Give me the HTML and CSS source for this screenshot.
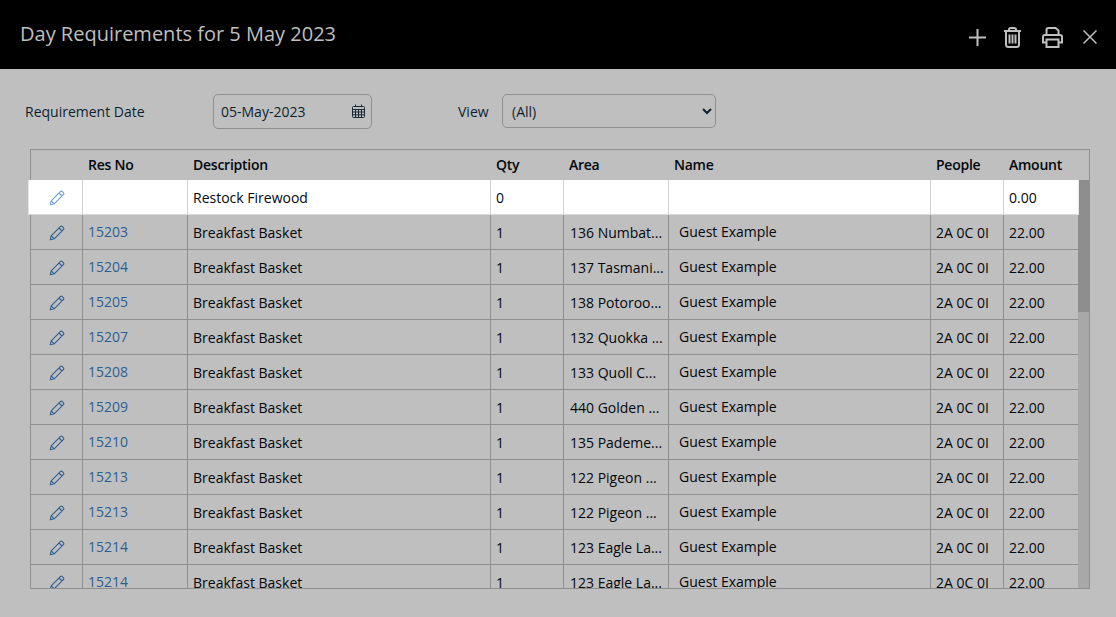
FILE: index.html
```html
<!DOCTYPE html>
<html lang="en">
<head>
<meta charset="utf-8">
<title>Day Requirements</title>
<link rel="stylesheet" href="styles.css">
</head>
<body>
<svg class="defs" width="0" height="0" aria-hidden="true">
  <symbol id="pencil" viewBox="0 0 16 16">
    <path d="M1.200 14.800l1-4L11.300 1.700a1.500 1.500 0 0 1 2.100 0l.9.9a1.500 1.500 0 0 1 0 2.100L5.200 13.800zM2.200 10.800l3 3M10 3l3 3" fill="none" stroke="currentColor" stroke-width="1.100" stroke-linejoin="round"/>
  </symbol>
</svg>
<header class="topbar">
  <h1 class="title">Day Requirements for 5 May 2023</h1>
  <div class="actions">
    <svg class="icon plus" viewBox="0 0 17 17"><path d="M8.500 0v17M0 8.500h17"/></svg>
    <svg class="icon trash" viewBox="0 0 19 21"><path d="M1 4h17M6 4V2.800A1.800 1.800 0 0 1 7.800 1h3.400A1.800 1.800 0 0 1 13 2.800V4M3 4v13.500A2.500 2.500 0 0 0 5.500 20h8a2.500 2.500 0 0 0 2.500-2.500V4M6.500 7.500v9M9.500 7.500v9M12.500 7.500v9"/></svg>
    <svg class="icon print" viewBox="0 0 21 21"><path d="M4.500 8V3a2 2 0 0 1 2-2h7l3 2.500V8M4.500 15.500H1V10a2 2 0 0 1 2-2h15a2 2 0 0 1 2 2v5.500h-3.500M4.500 12.500h12V20h-12z"/></svg>
    <svg class="icon close" viewBox="0 0 14 14"><path d="M.5.5l13 13M13.500.5l-13 13"/></svg>
  </div>
</header>
<main class="content">
  <form class="filters">
    <label class="label date-label" for="date">Requirement Date</label>
    <div class="date-box">
      <span id="date" class="date-value">05-May-2023</span>
      <svg class="cal" viewBox="0 0 13 14"><path d="M1.500 2.500h10a1 1 0 0 1 1 1v9a1 1 0 0 1-1 1h-10a1 1 0 0 1-1-1v-9a1 1 0 0 1 1-1zM.5 5.500h12M.5 8h12M.5 10.800h12M3.500 5.500v8M6.500 5.500v8M9.500 5.500v8M3.500 .5v2M9.500 .5v2"/></svg>
    </div>
    <label class="label view-label" for="view">View</label>
    <select id="view" class="view-select"><option>(All)</option></select>
  </form>
  <section class="grid">
    <div class="row head">
      <div class="cell"></div><div class="cell">Res No</div><div class="cell">Description</div><div class="cell">Qty</div><div class="cell">Area</div><div class="cell">Name</div><div class="cell">People</div><div class="cell">Amount</div>
    </div>
    <div class="scroller">
      <div class="rows">
        <div class="row item active">
          <div class="cell"><svg class="pen"><use href="#pencil"/></svg></div><div class="cell"></div><div class="cell">Restock Firewood</div><div class="cell">0</div><div class="cell"></div><div class="cell"></div><div class="cell"></div><div class="cell">0.00</div>
        </div>
        <div class="row item"><div class="cell"><svg class="pen"><use href="#pencil"/></svg></div><div class="cell res">15203</div><div class="cell">Breakfast Basket</div><div class="cell">1</div><div class="cell area">136 Numbat...</div><div class="cell guest">Guest Example</div><div class="cell">2A 0C 0I</div><div class="cell">22.00</div></div>
        <div class="row item"><div class="cell"><svg class="pen"><use href="#pencil"/></svg></div><div class="cell res">15204</div><div class="cell">Breakfast Basket</div><div class="cell">1</div><div class="cell area">137 Tasmani...</div><div class="cell guest">Guest Example</div><div class="cell">2A 0C 0I</div><div class="cell">22.00</div></div>
        <div class="row item"><div class="cell"><svg class="pen"><use href="#pencil"/></svg></div><div class="cell res">15205</div><div class="cell">Breakfast Basket</div><div class="cell">1</div><div class="cell area">138 Potoroo...</div><div class="cell guest">Guest Example</div><div class="cell">2A 0C 0I</div><div class="cell">22.00</div></div>
        <div class="row item"><div class="cell"><svg class="pen"><use href="#pencil"/></svg></div><div class="cell res">15207</div><div class="cell">Breakfast Basket</div><div class="cell">1</div><div class="cell area">132 Quokka ...</div><div class="cell guest">Guest Example</div><div class="cell">2A 0C 0I</div><div class="cell">22.00</div></div>
        <div class="row item"><div class="cell"><svg class="pen"><use href="#pencil"/></svg></div><div class="cell res">15208</div><div class="cell">Breakfast Basket</div><div class="cell">1</div><div class="cell area">133 Quoll C...</div><div class="cell guest">Guest Example</div><div class="cell">2A 0C 0I</div><div class="cell">22.00</div></div>
        <div class="row item"><div class="cell"><svg class="pen"><use href="#pencil"/></svg></div><div class="cell res">15209</div><div class="cell">Breakfast Basket</div><div class="cell">1</div><div class="cell area">440 Golden ...</div><div class="cell guest">Guest Example</div><div class="cell">2A 0C 0I</div><div class="cell">22.00</div></div>
        <div class="row item"><div class="cell"><svg class="pen"><use href="#pencil"/></svg></div><div class="cell res">15210</div><div class="cell">Breakfast Basket</div><div class="cell">1</div><div class="cell area">135 Pademe...</div><div class="cell guest">Guest Example</div><div class="cell">2A 0C 0I</div><div class="cell">22.00</div></div>
        <div class="row item"><div class="cell"><svg class="pen"><use href="#pencil"/></svg></div><div class="cell res">15213</div><div class="cell">Breakfast Basket</div><div class="cell">1</div><div class="cell area">122 Pigeon ...</div><div class="cell guest">Guest Example</div><div class="cell">2A 0C 0I</div><div class="cell">22.00</div></div>
        <div class="row item"><div class="cell"><svg class="pen"><use href="#pencil"/></svg></div><div class="cell res">15213</div><div class="cell">Breakfast Basket</div><div class="cell">1</div><div class="cell area">122 Pigeon ...</div><div class="cell guest">Guest Example</div><div class="cell">2A 0C 0I</div><div class="cell">22.00</div></div>
        <div class="row item"><div class="cell"><svg class="pen"><use href="#pencil"/></svg></div><div class="cell res">15214</div><div class="cell">Breakfast Basket</div><div class="cell">1</div><div class="cell area">123 Eagle La...</div><div class="cell guest">Guest Example</div><div class="cell">2A 0C 0I</div><div class="cell">22.00</div></div>
        <div class="row item"><div class="cell"><svg class="pen"><use href="#pencil"/></svg></div><div class="cell res">15214</div><div class="cell">Breakfast Basket</div><div class="cell">1</div><div class="cell area">123 Eagle La...</div><div class="cell guest">Guest Example</div><div class="cell">2A 0C 0I</div><div class="cell">22.00</div></div>
      </div>
      <div class="scrollbar"><div class="thumb"></div></div>
    </div>
  </section>
</main>
</body>
</html>
```
FILE: styles.css
```css
* { box-sizing: border-box; }
html, body { margin: 0; height: 100%; }
body {
  width: 1116px;
  height: 617px;
  overflow: hidden;
  background: #bfbfbf;
  color: #03070d;
  font-family: "Open Sans", sans-serif;
  font-size: 14px;
  line-height: 19px;
}
.defs { position: absolute; }
.topbar {
  height: 69px;
  background: #000;
  display: flex;
  justify-content: space-between;
  padding: 0 19px 0 20px;
}
.title {
  margin: 0;
  padding-top: 20px;
  font-size: 20px;
  line-height: 27px;
  font-weight: 400;
  color: #bfbfbf;
}
.actions { display: flex; align-items: center; padding-top: 5px; }
.icon { fill: none; stroke: #bfbfbf; display: block; }
.plus { width: 17px; height: 17px; stroke-width: 2; margin-right: 17px; }
.trash { width: 19px; height: 21px; stroke-width: 2; margin-right: 20px; }
.print { width: 21px; height: 21px; stroke-width: 2; margin-right: 20px; }
.close { width: 14px; height: 14px; stroke-width: 1.500; }
.content { padding: 25px 26px 0 30px; }
.filters { display: flex; align-items: center; height: 35px; }
.label { color: #0e1f30; }
.date-label { width: 188px; margin-left: -5px; }
.date-box {
  width: 159px;
  height: 35px;
  border: 1px solid #8f8f8f;
  border-radius: 5px;
  display: flex;
  align-items: center;
  justify-content: space-between;
  padding: 0 6px 2px 7px;
}
.date-value { color: #0e1f30; padding-top: 2px; }
.cal { width: 13px; height: 14px; fill: none; stroke: #1d2a36; stroke-width: 1; }
.view-label { margin-left: 86px; width: 44px; }
.view-select {
  width: 214px;
  height: 34px;
  align-self: flex-start;
  border: 1px solid #8f8f8f;
  border-radius: 5px;
  background-color: #bfbfbf;
  color: #0e1f30;
  font: inherit;
  padding-left: 5px;
}
.grid {
  margin-top: 20px;
  height: 440px;
  width: 1060px;
  border: 1px solid #8f8f8f;
  display: flex;
  flex-direction: column;
}
.row {
  display: grid;
  grid-template-columns: 52px 105px 303px 73px 105px 262px 73px auto;
}
.head {
  height: 30px;
  flex: none;
  font-weight: 600;
  letter-spacing: -0.25px;
  font-size: 14px;
  line-height: 30px;
  color: #03070d;
}
.head .cell { padding-left: 5px; }
.head .cell:first-child { padding-left: 0; }
.scroller {
  flex: 1;
  min-height: 0;
  display: flex;
  overflow-x: visible;
  overflow-y: clip;
}
.rows { width: 1047px; flex: none; position: relative; }
.item { height: 35px; border-bottom: 1px solid #8f8f8f; }
.item .cell {
  border-right: 1px solid #8f8f8f;
  padding: 8px 0 0 5px;
  white-space: nowrap;
  overflow: hidden;
}
.item .cell:last-child { border-right: 0; }
.item .cell:first-child { padding: 10px 0 0 18px; }
.pen { width: 16px; height: 16px; color: #2f5f93; display: block; }
.res { color: #2b5f94; margin-top: -1px; }
.area { padding-left: 6px !important; }
.guest { padding-top: 7px !important; padding-left: 10px !important; }
.active {
  background: #fff;
  height: 35px;
  border-bottom: 1px solid #d8d8d8;
  box-shadow: 1px 0 0 #e6e6e6, -1px 0 0 #e6e6e6;
  margin: 0 0 0 -2px;
  padding-left: 2px;
  position: relative;
  z-index: 2;
}
.active .cell { border-right-color: #d0d0d0; }
.active .pen { color: #6e9fd6; }
.scrollbar { flex: none; width: 11px; background: #a8a8a8; }
.thumb { height: 132px; background: #8e8e8e; }
```
